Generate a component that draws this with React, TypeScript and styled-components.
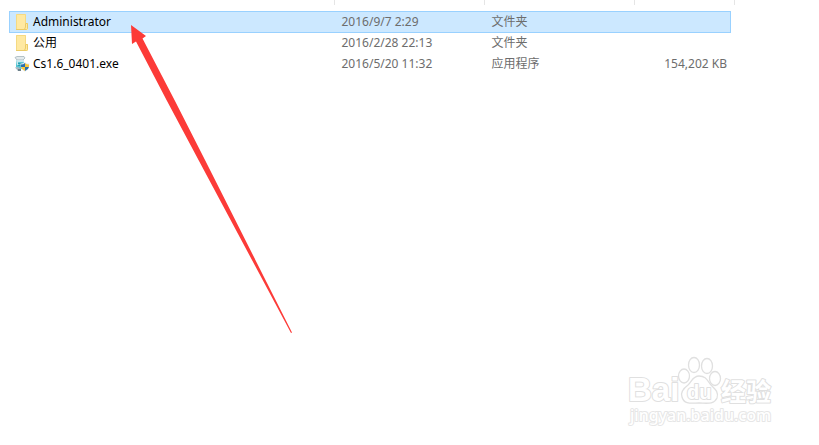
import React from 'react';
import styled, { createGlobalStyle } from 'styled-components';

const GlobalStyle = createGlobalStyle`
  * { box-sizing: border-box; }
  body {
    margin: 0;
    background: #fff;
    font-family: "Noto Sans", "Noto Sans CJK SC", sans-serif;
    font-size: 12px;
    line-height: 20px;
    color: #6d6d6d;
  }
`;

const Page = styled.main`
  position: relative;
  min-height: 100vh;
  padding: 0 0 0 9px;
  overflow: hidden;
`;

const ColumnDividers = styled.div`
  display: grid;
  grid-template-columns: 326px 150px 150px 100px;
  height: 5px;
  margin-bottom: 6px;
`;

const Divider = styled.span`
  border-right: 1px solid #e5e5e5;
`;

const FileTable = styled.table`
  width: 721px;
  table-layout: fixed;
  border-collapse: collapse;
`;

const Column = styled.col<{ $width: number }>`
  width: ${(p) => p.$width}px;
`;

const FileRow = styled.tr<{ $selected: boolean }>`
  border: 1px solid ${(p) => (p.$selected ? '#99d1ff' : 'transparent')};
  background: ${(p) => (p.$selected ? '#cce8ff' : 'transparent')};
`;

const Cell = styled.td<{ $align?: 'right' }>`
  height: 20px;
  padding: 0 3px 0 6px;
  text-align: ${(p) => p.$align ?? 'left'};
  white-space: nowrap;
`;

const NameCell = styled(Cell)`
  padding-left: 4px;
  color: #000;
`;

const FileName = styled.span`
  display: flex;
  align-items: center;
  gap: 3px;
`;

const Icon = styled.svg`
  width: 16px;
  height: 16px;
  flex: none;
`;

const Arrow = styled.svg`
  position: absolute;
  left: 131px;
  top: 25px;
  width: 162px;
  height: 309px;
  pointer-events: none;
`;

const Watermark = styled.svg`
  position: absolute;
  right: 39px;
  bottom: 15px;
  width: 155px;
  height: 80px;
  pointer-events: none;
`;

const OutlinedText = styled.text`
  font-family: "Liberation Sans", "Noto Sans CJK SC", sans-serif;
  font-weight: 700;
  fill: #fff;
  stroke: #e0e0e0;
  stroke-width: 2px;
  stroke-linejoin: round;
  paint-order: stroke;
`;

const AddressText = styled(OutlinedText)`
  font-family: "Noto Sans", sans-serif;
  font-weight: 500;
  stroke: #e6e6e6;
`;

const FolderIcon = () => (
  <Icon viewBox="0 0 16 16" aria-hidden="true">
    <path d="M2 0h10v9h2v7H2z" fill="#ffe9a2" />
    <path d="M2.500 15.500V.5h9V9" fill="none" stroke="#f5da83" />
    <path d="M2 15.500h10.500l1-1V9.500h-2v3.500l-1 2.500" fill="#ffe9a2" stroke="#ebcb67" />
  </Icon>
);

const InstallerIcon = () => (
  <Icon viewBox="0 0 16 16" aria-hidden="true">
    <path d="M1 1.500 3 .5h7l1 1.500-2 2H3z" fill="#e3eaed" stroke="#9aacb4" strokeWidth=".7" />
    <path d="M2 4h8l-.5 9H4L2 11z" fill="#56c5d3" />
    <path d="M2 4h8v2H4l.5 3H3z" fill="#c9e8ed" />
    <path d="M4 7h4v1H4zM4 9h3v1H4z" fill="#2d9eae" />
    <path d="M1 11.500 4 11l3 2v2H4z" fill="#a7b8c0" />
    <path d="M4 13h3v2H4z" fill="#6b7e89" />
    <path d="M11 6q2 1.500 4.500 1.500 0 6-4.500 8.300Q6.500 13.500 6.500 7.500 9 7.500 11 6z" fill="#e7eef3" />
    <path d="M11 7v4H7V8.500Q9.500 8.500 11 7z" fill="#2870ae" />
    <path d="M11 7q1.500 1.500 4 1.500V11h-4z" fill="#f9c63c" />
    <path d="M7 11h4v4Q7.500 13.500 7 11z" fill="#f9c63c" />
    <path d="M11 11h4q-.5 2.500-4 4z" fill="#2870ae" />
  </Icon>
);

interface FileEntry {
  name: string;
  modified: string;
  type: string;
  size?: string;
  selected?: boolean;
}

const files: FileEntry[] = [
  { name: 'Administrator', modified: '2016/9/7 2:29', type: '文件夹', selected: true },
  { name: '公用', modified: '2016/2/28 22:13', type: '文件夹' },
  { name: 'Cs1.6_0401.exe', modified: '2016/5/20 11:32', type: '应用程序', size: '154,202 KB' },
];

const columnWidths = [326, 150, 150, 95];

export default function App() {
  return (
    <Page>
      <GlobalStyle />
      <ColumnDividers aria-hidden="true">
        {columnWidths.map((_, i) => <Divider key={i} />)}
      </ColumnDividers>
      <FileTable>
        <colgroup>
          {columnWidths.map((width, i) => <Column key={i} $width={width} />)}
        </colgroup>
        <tbody>
          {files.map((file) => (
            <FileRow key={file.name} $selected={!!file.selected} aria-selected={!!file.selected}>
              <NameCell>
                <FileName>
                  {file.size ? <InstallerIcon /> : <FolderIcon />}
                  {file.name}
                </FileName>
              </NameCell>
              <Cell>{file.modified}</Cell>
              <Cell>{file.type}</Cell>
              <Cell $align="right">{file.size}</Cell>
            </FileRow>
          ))}
        </tbody>
      </FileTable>
      <Arrow viewBox="0 0 162 309" aria-hidden="true">
        <path d="M0 0 15 11 11.500 13.500 43.500 75 74 135 161 307.500 160 308 67.500 135 35.500 75 5 16.500 1 19z" fill="#fc3b38" />
      </Arrow>
      <Watermark viewBox="0 0 155 80">
        <OutlinedText x="3" y="51" fontSize="33">Bai</OutlinedText>
        <g fill="#fff" stroke="#e0e0e0" strokeWidth="1.300">
          <ellipse cx="59" cy="26" rx="5.500" ry="7" />
          <ellipse cx="69" cy="15" rx="5.500" ry="7.500" />
          <ellipse cx="82" cy="16" rx="5.500" ry="7.500" />
          <ellipse cx="90" cy="28.500" rx="5.500" ry="7" />
          <path d="M74 26c-6 0-7 5-11 9-4 3-8 7-6 12 2 8 10 6 17 6s15 2 18-5c2-6-2-9-6-13-4-5-5-9-12-9z" />
        </g>
        <OutlinedText x="62" y="49" fontSize="20">du</OutlinedText>
        <OutlinedText x="96" y="51" fontSize="25">经验</OutlinedText>
        <AddressText x="5" y="71" fontSize="16">jingyan.baidu.com</AddressText>
      </Watermark>
    </Page>
  );
}
